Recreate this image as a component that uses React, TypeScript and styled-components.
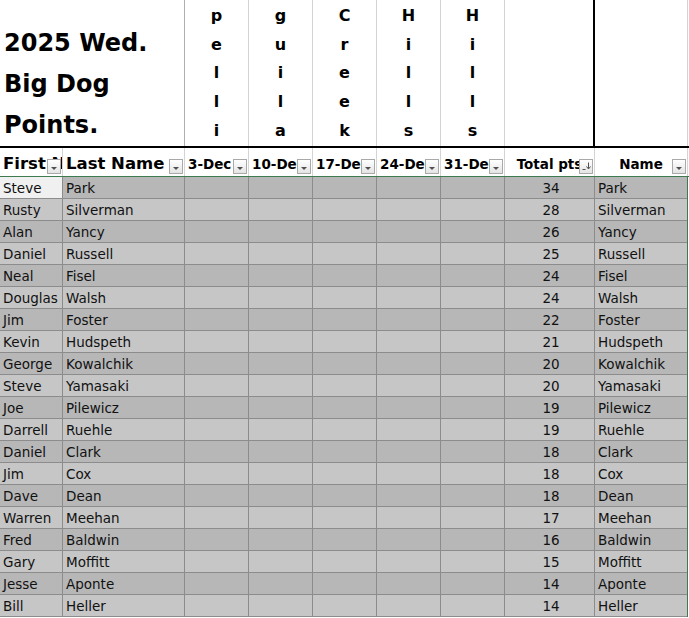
import React from 'react';
import styled, { createGlobalStyle } from 'styled-components';

const GlobalStyle = createGlobalStyle`
  html, body {
    margin: 0;
    padding: 0;
    background: #ffffff;
  }
  body {
    font-family: 'Comic Sans MS', 'DejaVu Sans', sans-serif;
    color: #000000;
  }
`;

// column widths include the 1px right gridline of each cell
const COLUMNS = '63px 122px 64px 64px 64px 64px 64px 90px 93px';

const colors = {
  black: '#000000',
  lightLine: '#d4d4d4',
  gridLine: '#8c8c8c',
  green: '#3d7a50',
  darkRow: '#b7b7b7',
  lightRow: '#c6c6c6',
  selected: '#f0f0f0',
};

const players = [
  ['Steve', 'Park', 34],
  ['Rusty', 'Silverman', 28],
  ['Alan', 'Yancy', 26],
  ['Daniel', 'Russell', 25],
  ['Neal', 'Fisel', 24],
  ['Douglas', 'Walsh', 24],
  ['Jim', 'Foster', 22],
  ['Kevin', 'Hudspeth', 21],
  ['George', 'Kowalchik', 20],
  ['Steve', 'Yamasaki', 20],
  ['Joe', 'Pilewicz', 19],
  ['Darrell', 'Ruehle', 19],
  ['Daniel', 'Clark', 18],
  ['Jim', 'Cox', 18],
  ['Dave', 'Dean', 18],
  ['Warren', 'Meehan', 17],
  ['Fred', 'Baldwin', 16],
  ['Gary', 'Moffitt', 15],
  ['Jesse', 'Aponte', 14],
  ['Bill', 'Heller', 14],
] as const;

const courses = ['pelli', 'guila', 'Creek', 'Hills', 'Hills'];
const dates = ['3-Dec', '10-Dec', '17-Dec', '24-Dec', '31-Dec'];

const Sheet = styled.div`
  width: 689px;
  height: 618px;
  overflow: hidden;
  background: #ffffff;
`;

const TopBand = styled.div`
  display: grid;
  grid-template-columns: ${COLUMNS};
  height: 146px;
  border-bottom: 2px solid ${colors.black};
`;

const TitleCell = styled.div`
  grid-column: span 2;
  display: flex;
  flex-direction: column;
  justify-content: flex-end;
  padding-left: 4px;
  border-right: 1px solid #b0b0b0;
  font-size: 24px;
  font-weight: bold;
  line-height: 41px;
  white-space: nowrap;
`;

const LetterCell = styled.div`
  display: flex;
  flex-direction: column;
  align-items: center;
  padding-top: 2px;
  border-right: 1px solid ${colors.lightLine};
  font-size: 16px;
  font-weight: bold;
  line-height: 28.7px;
`;

const BlankCell = styled.div<{ $edge?: 'black' | 'light' }>`
  border-right: ${(p) => (p.$edge === 'black' ? `2px solid ${colors.black}` : `1px solid ${colors.lightLine}`)};
`;

const HeaderRow = styled.div`
  display: grid;
  grid-template-columns: ${COLUMNS};
  height: 28px;
  border-bottom: 1px solid ${colors.green};
`;

const HeaderCell = styled.div<{ $big?: boolean; $align?: 'left' | 'center' }>`
  position: relative;
  display: flex;
  align-items: center;
  min-width: 0;
  padding: ${(p) => (p.$align === 'center' ? '0 4px 0 4px' : '0 0 0 3px')};
  padding-top: ${(p) => (p.$big ? '2px' : '3px')};
  border-right: 1px solid ${colors.lightLine};
  overflow: hidden;
  font-size: ${(p) => (p.$big ? '16.5px' : '13.5px')};
  font-weight: bold;
`;

const HeaderLabel = styled.span<{ $align?: 'left' | 'center' }>`
  flex: 1;
  min-width: 0;
  overflow: hidden;
  white-space: nowrap;
  text-overflow: clip;
  text-align: ${(p) => (p.$align === 'center' ? 'center' : 'left')};
`;

const FilterButton = styled.div`
  position: absolute;
  right: 1px;
  bottom: 2px;
  width: 14px;
  height: 15px;
  box-sizing: border-box;
  display: flex;
  align-items: flex-end;
  justify-content: center;
  padding-bottom: 3px;
  border: 1px solid #a9a9a9;
  background: linear-gradient(#ffffff, #e4e4e4);
`;

const FilterArrow = styled.span`
  width: 0;
  height: 0;
  border-left: 3px solid transparent;
  border-right: 3px solid transparent;
  border-top: 3px solid #505050;
`;

const Body = styled.div`
  width: 687px;
  border-right: 1px solid ${colors.green};
`;

const DataRow = styled.div<{ $dark: boolean }>`
  display: grid;
  grid-template-columns: ${COLUMNS};
  height: 22px;
  box-sizing: border-box;
  border-bottom: 1px solid ${colors.gridLine};
  background: ${(p) => (p.$dark ? colors.darkRow : colors.lightRow)};
`;

const Cell = styled.div<{ $align?: 'left' | 'center'; $selected?: boolean; $last?: boolean }>`
  display: flex;
  align-items: center;
  justify-content: ${(p) => (p.$align === 'center' ? 'center' : 'flex-start')};
  padding: 1px 0 0 3px;
  border-right: ${(p) => (p.$last ? 'none' : `1px solid ${colors.gridLine}`)};
  background: ${(p) => (p.$selected ? colors.selected : 'transparent')};
  font-size: 13.5px;
  line-height: 20px;
  white-space: nowrap;
  overflow: hidden;
  color: #111111;
`;

function Filter({ sorted }: { sorted?: boolean }) {
  return (
    <FilterButton>
      {sorted ? (
        <svg width="9" height="8" viewBox="0 0 9 8">
          <path d="M0.5 7.5h3" stroke="#505050" strokeWidth="1" />
          <path d="M6.5 0.5v6" stroke="#505050" strokeWidth="1" />
          <path d="M4.5 4.5l2 2.5l2-2.5" stroke="#505050" strokeWidth="1" fill="none" />
        </svg>
      ) : (
        <FilterArrow />
      )}
    </FilterButton>
  );
}

export default function App() {
  return (
    <Sheet>
      <GlobalStyle />
      <TopBand>
        <TitleCell>
          <span>2025 Wed.</span>
          <span>Big Dog</span>
          <span>Points.</span>
        </TitleCell>
        {courses.map((word, i) => (
          <LetterCell key={i}>
            {word.split('').map((ch, j) => (
              <span key={j}>{ch}</span>
            ))}
          </LetterCell>
        ))}
        <BlankCell $edge="black" />
        <BlankCell />
      </TopBand>

      <HeaderRow>
        <HeaderCell $big>
          <HeaderLabel>First Name</HeaderLabel>
          <Filter />
        </HeaderCell>
        <HeaderCell $big>
          <HeaderLabel>Last Name</HeaderLabel>
          <Filter />
        </HeaderCell>
        {dates.map((d) => (
          <HeaderCell key={d}>
            <HeaderLabel>{d}</HeaderLabel>
            <Filter />
          </HeaderCell>
        ))}
        <HeaderCell $align="center">
          <HeaderLabel $align="center">Total pts</HeaderLabel>
          <Filter sorted />
        </HeaderCell>
        <HeaderCell $align="center">
          <HeaderLabel $align="center">Name</HeaderLabel>
          <Filter />
        </HeaderCell>
      </HeaderRow>

      <Body>
        {players.map(([first, last, pts], i) => (
          <DataRow key={i} $dark={i % 2 === 0}>
            <Cell $selected={i === 0}>{first}</Cell>
            <Cell>{last}</Cell>
            {dates.map((d) => (
              <Cell key={d} />
            ))}
            <Cell $align="center">{pts}</Cell>
            <Cell $last>{last}</Cell>
          </DataRow>
        ))}
      </Body>
    </Sheet>
  );
}
